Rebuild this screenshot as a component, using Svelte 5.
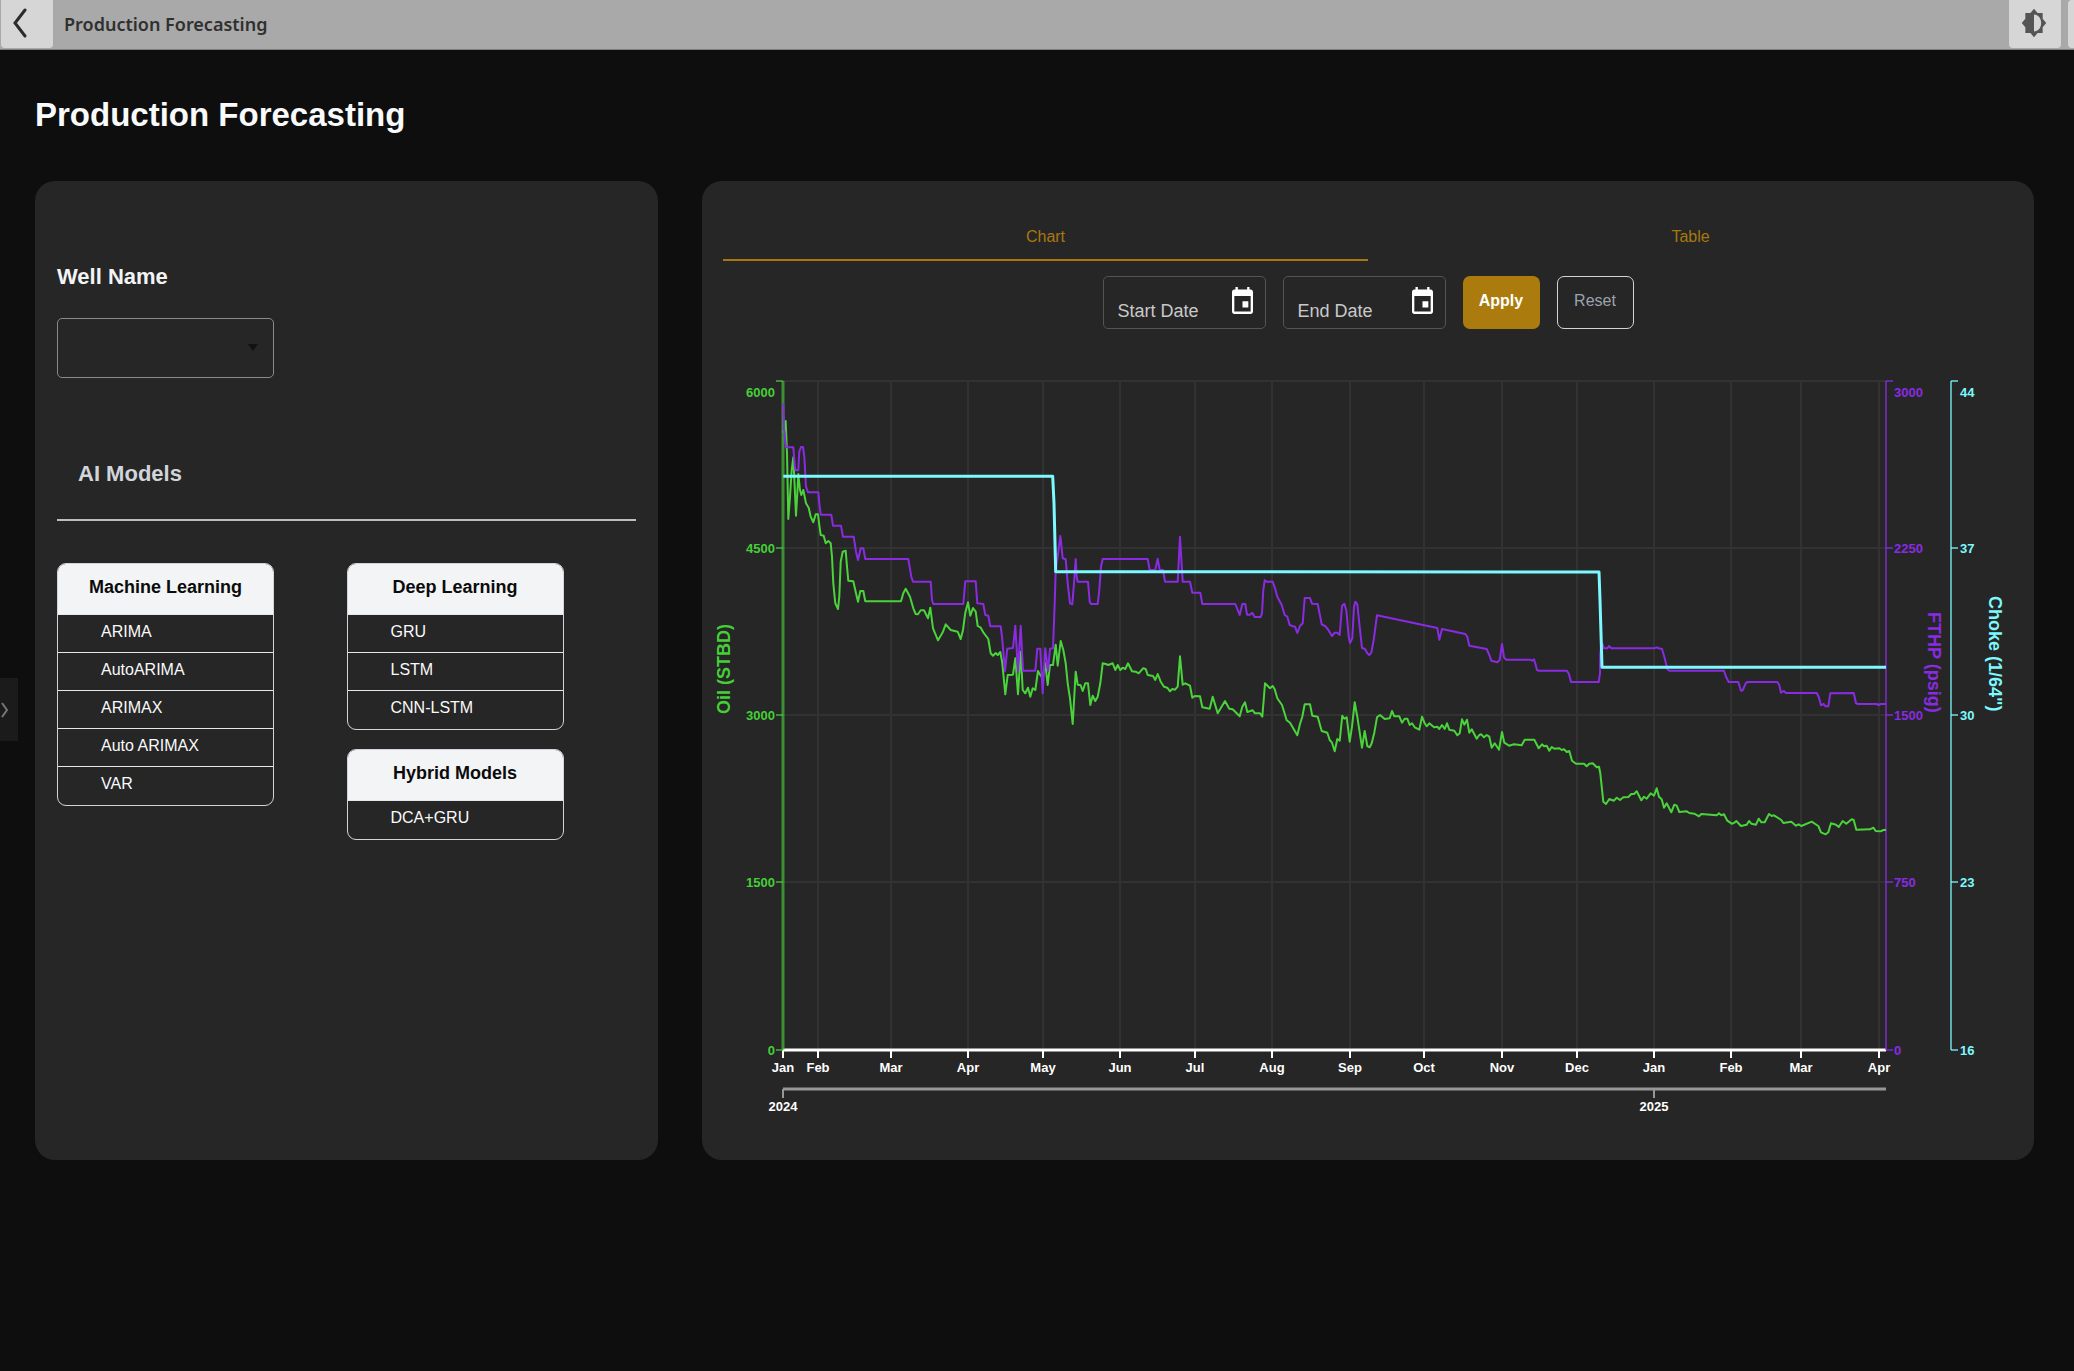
<script>
  const modelColumns = [
    [{ title: 'Machine Learning', items: ['ARIMA', 'AutoARIMA', 'ARIMAX', 'Auto ARIMAX', 'VAR'] }],
    [
      { title: 'Deep Learning', items: ['GRU', 'LSTM', 'CNN-LSTM'] },
      { title: 'Hybrid Models', items: ['DCA+GRU'] }
    ]
  ];

  let well = $state('');
  let tab = $state('Chart');
  let startDate = $state('');
  let endDate = $state('');

  function reset() {
    startDate = '';
    endDate = '';
  }

  // Plot area inside the chart's 1332 x 800 canvas
  const left = 81;
  const right = 1184;
  const top = 21;
  const bottom = 690;
  const choke = 1249;

  const rows = [0, 1, 2, 3, 4].map((i) => ({
    y: Math.floor(top + ((bottom - top) * i) / 4),
    labelY: Math.floor(top + ((bottom - top) * i) / 4) + (i === 0 ? 11 : 0),
    oil: 6000 - 1500 * i,
    fthp: 3000 - 750 * i,
    choke: 44 - 7 * i
  }));

  const months = [
    ['Jan', 81], ['Feb', 116], ['Mar', 189], ['Apr', 266], ['May', 341], ['Jun', 418],
    ['Jul', 493], ['Aug', 570], ['Sep', 648], ['Oct', 722], ['Nov', 800], ['Dec', 875],
    ['Jan', 952], ['Feb', 1029], ['Mar', 1099], ['Apr', 1177]
  ];
  const years = [['2024', 81], ['2025', 952]];

  // Each series is kept in three stretches of time; a stretch has its own origin
  // and holds its points in thirds of a canvas unit.
  const origins = [[-2, 10], [358, 90], [718, 160]];

  function line(stretches) {
    return stretches
      .flatMap((s, i) =>
        s.trim().split(/\s+/).map((p) => {
          const [x, y] = p.split(',').map(Number);
          return `${(origins[i][0] + x / 3).toFixed(1)},${(origins[i][1] + y / 3).toFixed(1)}`;
        })
      )
      .join(' ');
  }

  const fthpLine = line([
    `250,100 252,180 258,232 280,232 285,295 288,301 295,301 298,245 303,231 309,231 313,260 318,350 324,367 355,367
     358,400 362,434 394,434 399,467 423,467 429,500 461,500 468,545 474,570 482,535 490,535 496,567 625,567 634,620
     639,635 692,635 696,690 700,702 790,702 796,634 827,634 832,700 850,702 856,735 865,737 871,769 902,769 906,800
     915,903 922,836 939,834 946,767 954,905 962,767 969,902 1006,902 1012,836 1021,836 1028,970 1036,835 1044,903
     1050,836 1059,835 1064,700 1067,600 1073,560 1081,498`,
    `3,275 8,325 17,328 23,400 30,460 37,463 42,400 47,327 50,380 53,395 84,395 89,455 93,462 113,462 118,420 123,350
     128,327 263,327 269,360 286,360 293,326 299,360 309,360 315,395 353,395 360,260 368,395 390,395 397,428 421,428
     427,462 526,462 539,495 547,462 556,462 561,494 570,494 577,488 584,501 602,501 606,490 610,420 614,391 620,395
     638,395 645,415 652,440 665,465 674,495 682,500 689,525 697,528 705,530 712,549 720,528 728,520 734,444 750,444
     756,461 773,462 785,523 795,528 803,537 816,558 824,548 832,548 839,555 846,468 853,461 859,480 866,560 870,579
     877,565 882,470 886,455 892,463 898,520 906,594 915,597 922,610 928,615 934,608 941,570 951,496`,
    `52,324 58,359 66,327 136,342 142,350 148,377 200,387 208,405 214,422 232,427 239,420 246,372 252,412 258,419
     330,419 336,422 342,418 347,435 351,450 355,452 440,452 446,460 453,486 536,486 540,460 541,400 545,366 552,385
     562,385 567,378 574,385 703,385 710,382 716,385 726,387 733,410 742,447 748,452 912,452 918,470 926,486 955,486
     963,512 968,511 978,488 984,486 1072,486 1078,495 1083,518 1091,513 1098,519 1190,519 1196,530 1203,556 1211,552
     1216,559 1225,559 1231,520 1301,519 1308,550 1314,552 1370,552 1376,555 1382,552 1398,552`
  ]);

  const oilLine = line([
    `250,188 257,153 261,250 265,447 270,380 275,300 280,262 284,350 288,437 292,370 295,312 300,360 304,375 310,360
     318,400 326,413 332,440 340,457 347,433 354,433 358,465 362,495 371,497 377,520 385,513 392,520 396,560 400,640
     406,700 414,717 418,680 422,575 428,545 437,542 441,590 445,632 460,634 468,670 474,695 481,663 490,663 496,694
     603,694 610,670 617,656 630,680 640,715 647,732 654,733 662,721 672,721 684,745 691,713 699,775 714,811 722,797
     729,785 737,763 752,780 773,785 782,807 789,780 796,728 804,697 811,737 819,714 827,725 833,768 842,773 850,787
     865,807 872,850 879,857 887,849 893,855 901,846 907,880 916,973 923,915 939,914 946,865 954,973 962,845 968,960
     976,970 984,953 991,980 998,955 1006,960 1014,903 1021,915 1028,925 1036,880 1043,945 1050,885 1059,885 1067,824
     1073,887 1082,813`,
    `10,600 17,640 23,700 30,745 38,822 47,665 53,704 62,706 68,723 76,700 84,700 91,765 98,737 106,753 113,740
     121,700 128,640 137,642 145,645 158,640 166,660 173,645 181,660 188,653 196,657 204,640 216,664 227,665 236,670
     249,655 257,657 263,675 279,678 286,690 293,672 302,695 312,710 322,713 330,724 337,717 345,719 353,710 360,619
     368,704 376,700 390,707 397,743 404,738 420,739 427,772 449,776 458,740 473,790 495,753 508,776 518,778 539,799
     547,770 555,757 562,786 578,781 585,790 600,790 607,800 611,750 615,700 630,715 638,708 644,718 652,745 666,765
     680,811 690,818 712,856 720,822 727,800 734,763 750,763 757,797 773,800 785,843 802,848 809,870 816,878 824,904
     832,867 839,872 847,797 853,806 860,802 869,875 876,830 884,757 892,800 906,893 914,843 922,888 929,892 935,880
     943,848 951,802 960,795 974,807 989,805 996,783 1003,799 1018,799 1026,818 1034,806 1042,806 1049,825 1056,820
     1064,832 1078,839`,
    `6,590 14,610 20,619 28,610 42,622 52,620 58,627 66,615 74,627 81,610 88,629 103,632 112,646 119,640 126,598
     133,614 141,599 148,638 155,628 170,656 178,645 184,643 192,652 200,645 208,650 215,683 224,670 237,689 246,636
     253,668 267,677 282,673 305,676 314,659 343,659 356,685 366,673 372,679 380,677 388,692 395,681 403,686 418,685
     425,690 432,688 440,696 448,693 456,722 468,731 492,731 500,739 508,731 518,730 530,742 537,740 541,760 550,845
     558,852 568,837 582,842 590,833 600,840 610,832 625,831 634,822 642,822 650,814 664,841 672,830 680,836 692,820
     702,827 710,805 717,830 725,838 732,863 740,850 754,877 763,854 770,857 778,876 800,874 808,879 823,881 837,889
     844,882 890,886 897,880 904,886 912,883 922,902 935,911 942,909 949,903 963,918 980,914 987,903 994,911 1008,914
     1016,896 1024,907 1034,907 1047,882 1055,888 1062,886 1084,900 1090,909 1114,905 1128,917 1136,913 1144,918
     1175,905 1195,918 1203,937 1217,943 1225,937 1233,910 1248,914 1256,921 1268,903 1279,911 1295,898 1301,900
     1309,929 1350,928 1360,923 1367,933 1382,934 1390,930 1398,930`
  ]);

  const chokeLine = line(['250,319 1058,319 1062,400 1067,605', '0,365', '537,156 540,240 546,442 1398,442']);
</script>

{#snippet calendar()}
  <svg class="calendar" viewBox="3 1 18 21" preserveAspectRatio="none" aria-hidden="true">
    <path d="M19 3h-1V1h-2v2H8V1H6v2H5c-1.11 0-2 .9-2 2v15c0 1.1.89 2 2 2h14c1.1 0 2-.9 2-2V5c0-1.1-.9-2-2-2zm0 17H5V8h14v12zM12 12h5v5h-5z" />
  </svg>
{/snippet}

<header class="topbar">
  <button class="back" aria-label="Back">
    <svg viewBox="0 0 14 30" aria-hidden="true"><path d="M12 2 2 15l10 13" /></svg>
  </button>
  <span class="crumb">Production Forecasting</span>
  <button class="theme" aria-label="Toggle theme">
    <svg viewBox="0 0 24 24" preserveAspectRatio="none" aria-hidden="true">
      <path d="M20 15.310 23.310 12 20 8.690V4h-4.690L12 .69 8.690 4H4v4.690L.69 12 4 15.310V20h4.690L12 23.310 15.310 20H20zM12 18.800V5.200c3.900 0 6.600 3 6.600 6.800s-2.700 6.800-6.600 6.800z" />
    </svg>
  </button>
  <button class="more" aria-label="More"></button>
</header>

<button class="drawer" aria-label="Open panel">
  <svg viewBox="0 0 8 16" aria-hidden="true"><path d="M2 1l5 7-5 7" /></svg>
</button>

<main>
  <h1>Production Forecasting</h1>

  <div class="layout">
    <section class="card side">
      <label class="field-title" for="well">Well Name</label>
      <div class="select-wrap">
        <select id="well" bind:value={well}>
          <option value=""></option>
        </select>
        <svg class="caret" viewBox="0 0 10 7" aria-hidden="true"><path d="M0 0h10L5 7z" /></svg>
      </div>

      <h2>AI Models</h2>

      <div class="models">
        {#each modelColumns as groups}
          <div class="model-column">
            {#each groups as group}
              <div class="group">
                <h3>{group.title}</h3>
                <ul>
                  {#each group.items as item}
                    <li><button>{item}</button></li>
                  {/each}
                </ul>
              </div>
            {/each}
          </div>
        {/each}
      </div>
    </section>

    <section class="card">
      <div class="tabs" role="tablist">
        {#each ['Chart', 'Table'] as name}
          <button role="tab" aria-selected={tab === name} class:active={tab === name} onclick={() => (tab = name)}>{name}</button>
        {/each}
      </div>

      <div class="toolbar">
        <div class="date">
          <input aria-label="Start Date" placeholder="Start Date" bind:value={startDate} />
          <button aria-label="Choose start date">{@render calendar()}</button>
        </div>
        <div class="date">
          <input aria-label="End Date" placeholder="End Date" bind:value={endDate} />
          <button aria-label="Choose end date">{@render calendar()}</button>
        </div>
        <button class="apply">Apply</button>
        <button class="reset" onclick={reset}>Reset</button>
      </div>

      <svg class="chart" viewBox="0 0 1332 800" role="img" aria-label="Oil rate, FTHP and choke by month">
        <g class="grid">
          {#each rows.slice(0, 4) as row}
            <line x1={left} x2={right} y1={row.y} y2={row.y} />
          {/each}
          {#each months.slice(1) as [, x]}
            <line x1={x} x2={x} y1={top} y2={bottom} />
          {/each}
        </g>

        <g class="x-axis">
          <line class="base" x1={left} x2={right} y1={bottom} y2={bottom} />
          {#each months as [name, x]}
            <line x1={x} x2={x} y1={bottom} y2={bottom + 8} />
            <text {x} y={bottom + 22}>{name}</text>
          {/each}
          <g class="year-axis">
            <line class="base" x1={left} x2={right} y1="729" y2="729" />
            {#each years as [, x]}
              <line x1={x} x2={x} y1="729" y2="738" />
            {/each}
          </g>
          {#each years as [name, x]}
            <text {x} y="751">{name}</text>
          {/each}
        </g>

        <g class="y-axis oil">
          <line class="wide" x1={left} x2={left} y1={top} y2={bottom} />
          {#each rows as row}
            <line x1={left - 7} x2={left} y1={row.y} y2={row.y} />
            <text x={left - 8} y={row.labelY + 5}>{row.oil}</text>
          {/each}
          <text class="name" transform="translate(28 354) rotate(-90)">Oil (STBD)</text>
        </g>

        <g class="y-axis fthp">
          <line x1={right} x2={right} y1={top} y2={bottom} />
          {#each rows as row}
            <line x1={right} x2={right + 7} y1={row.y} y2={row.y} />
            <text x={right + 8} y={row.labelY + 5}>{row.fthp}</text>
          {/each}
          <text class="name" transform="translate(1226 252) rotate(90)">FTHP (psig)</text>
        </g>

        <g class="y-axis choke">
          <line x1={choke} x2={choke} y1={top} y2={bottom} />
          {#each rows as row}
            <line x1={choke} x2={choke + 7} y1={row.y} y2={row.y} />
            <text x={choke + 9} y={row.labelY + 5}>{row.choke}</text>
          {/each}
          <text class="name" transform="translate(1287 236) rotate(90)">Choke (1/64")</text>
        </g>

        <polyline class="series oil-line" points={oilLine} />
        <polyline class="series fthp-line" points={fthpLine} />
        <polyline class="series choke-line" points={chokeLine} />
      </svg>
    </section>
  </div>
</main>

<style>
  :global(body) {
    background: #0e0e0e;
    font-family: 'Liberation Sans', Arial, sans-serif;
  }

  button,
  input,
  select {
    box-sizing: border-box;
    margin: 0;
    padding: 0;
    border: 0;
    background: none;
    color: inherit;
    font: inherit;
  }

  h1,
  h2,
  h3,
  ul {
    margin: 0;
    padding: 0;
  }

  .topbar {
    box-sizing: border-box;
    display: flex;
    height: 50px;
    padding: 0 0 1px 1px;
    border-bottom: 1px solid #7d7d7d;
    background: #a9a9a9;
  }

  .topbar button {
    display: grid;
    place-items: center;
    height: 48px;
    border-radius: 0 0 4px 4px;
    background: #d6d6d6;
  }

  .topbar .back {
    width: 52px;
    padding: 0 14px 2px 0;
  }

  .back svg {
    width: 14px;
    height: 30px;
    fill: none;
    stroke: #2b2b2b;
    stroke-width: 3;
    stroke-linecap: round;
  }

  .crumb {
    flex: 1;
    padding-left: 11px;
    color: #303030;
    font: 600 18px/48px 'Noto Sans', 'Open Sans', sans-serif;
  }

  .topbar .theme {
    width: 52px;
    margin-right: 7px;
    padding: 0 2px 2px 0;
  }

  .theme svg {
    width: 26px;
    height: 30px;
    fill: #555;
  }

  .topbar .more {
    width: 6px;
    border-radius: 4px 0 0 4px;
  }

  .drawer {
    position: absolute;
    top: 678px;
    left: 0;
    width: 18px;
    height: 63px;
    background: #1b1b1b;
    text-align: left;
  }

  .drawer svg {
    display: block;
    width: 8px;
    height: 16px;
    fill: none;
    stroke: #777;
    stroke-width: 2;
  }

  main {
    padding: 43px 40px 44px 35px;
  }

  h1 {
    margin-bottom: 44px;
    color: #f9fafb;
    font-size: 33px;
    line-height: 44px;
  }

  .layout {
    display: grid;
    grid-template-columns: 623fr 1332fr;
    gap: 44px;
  }

  .card {
    min-width: 0;
    border-radius: 20px;
    background: #262626;
  }

  .side {
    padding: 82px 22px 42px;
  }

  .field-title,
  h2 {
    display: block;
    color: #f3f4f6;
    font-size: 22px;
    font-weight: 700;
    line-height: 28px;
  }

  h2 {
    padding: 0 21px 31px;
    border-bottom: 2px solid #bdbdbd;
    color: #d1d5db;
  }

  .select-wrap {
    position: relative;
    width: 217px;
    margin: 27px 0 82px;
  }

  select {
    display: block;
    width: 100%;
    height: 60px;
    padding: 0 16px;
    border: 1px solid #8a8a8a;
    border-radius: 5px;
    color: #f3f4f6;
    appearance: none;
  }

  .caret {
    position: absolute;
    top: 26px;
    right: 16px;
    width: 10px;
    height: 7px;
    fill: #121212;
    pointer-events: none;
  }

  .models {
    display: grid;
    grid-template-columns: 1fr 1fr;
    margin-top: 42px;
  }

  .model-column {
    display: flex;
    flex-direction: column;
    gap: 19px;
  }

  .group {
    width: 75%;
    overflow: hidden;
    box-sizing: border-box;
    border: 1px solid #d1d5db;
    border-radius: 9px;
  }

  h3 {
    padding-bottom: 4px;
    border-bottom: 1px solid #e5e7eb;
    background: #f3f4f6;
    color: #0b0b0b;
    font-size: 18px;
    line-height: 46px;
    text-align: center;
  }

  ul {
    padding-bottom: 1px;
    list-style: none;
  }

  li + li {
    border-top: 1px solid #e5e7eb;
  }

  li button {
    display: block;
    width: 100%;
    padding: 0 43px 4px;
    color: #f9fafb;
    font-size: 16px;
    line-height: 33px;
    text-align: left;
  }

  .tabs {
    display: flex;
    padding: 35px 21px 0;
  }

  .tabs button {
    flex: 1;
    height: 45px;
    padding-bottom: 1px;
    border-bottom: 2px solid transparent;
    color: #a8780f;
    font-size: 16px;
  }

  .tabs .active {
    border-color: #a8780f;
  }

  .toolbar {
    display: flex;
    justify-content: center;
    gap: 17px;
    padding: 15px 21px 31px;
  }

  .toolbar > * {
    box-sizing: border-box;
    height: 53px;
  }

  .date {
    display: flex;
    width: 163px;
    padding: 0 12px 0 14px;
    border: 1px solid #545454;
    border-radius: 5px;
  }

  .date input {
    flex: 1;
    min-width: 0;
    padding-top: 18px;
    color: #c9c9c9;
    font-size: 18px;
    outline: 0;
  }

  .date input::placeholder {
    color: #c9c9c9;
    opacity: 1;
  }

  .date button {
    align-self: flex-start;
    padding-top: 10px;
  }

  .calendar {
    display: block;
    width: 21px;
    height: 27px;
    fill: #fff;
  }

  .apply,
  .reset {
    width: 77px;
    padding-bottom: 4px;
    border-radius: 7px;
    font-size: 16px;
  }

  .apply {
    background: #ab7c0d;
    color: #fff;
    font-weight: 700;
  }

  .reset {
    border: 1px solid #d1d5db;
    color: #9ca3af;
  }

  .chart {
    display: block;
    width: 100%;
    height: auto;
    font-size: 13px;
    font-weight: 700;
  }

  .grid line {
    stroke: #323232;
    stroke-width: 2;
  }

  .x-axis {
    fill: #fff;
    stroke-width: 2;
    text-anchor: middle;
  }

  .x-axis line {
    stroke: #fff;
  }

  .x-axis .base {
    stroke-width: 3;
  }

  .x-axis .year-axis line {
    stroke: #979797;
  }

  .y-axis line {
    stroke-width: 2;
    opacity: 0.65;
  }

  .y-axis .wide {
    stroke-width: 3;
  }

  .y-axis .name {
    font-size: 18px;
    text-anchor: start;
  }

  .oil {
    fill: #45cf37;
    stroke: none;
    text-anchor: end;
  }

  .oil line {
    stroke: #4ac83b;
  }

  .fthp {
    fill: #8a2be2;
  }

  .fthp line {
    stroke: #8a2be2;
  }

  .choke {
    fill: #7df9ff;
  }

  .choke line {
    stroke: #7df9ff;
  }

  .series {
    fill: none;
    stroke-width: 2;
    stroke-linejoin: round;
  }

  .oil-line {
    stroke: #4bd33b;
  }

  .fthp-line {
    stroke: #8a2be2;
  }

  .choke-line {
    stroke: #7df9ff;
    stroke-width: 3;
  }
</style>
